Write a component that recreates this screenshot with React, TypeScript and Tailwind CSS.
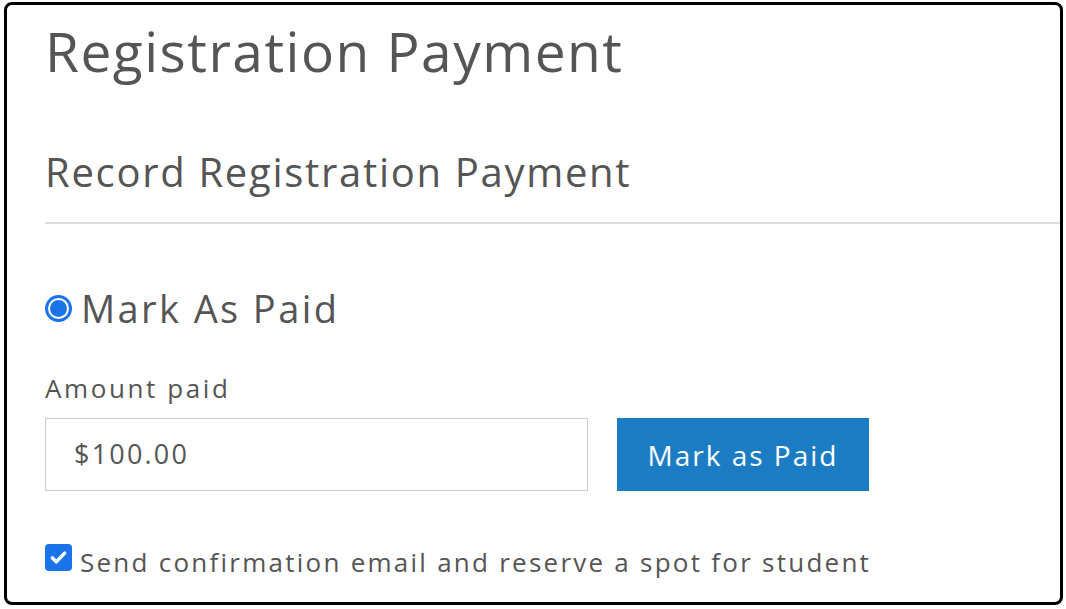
export default function App() {
  return (
    <div
      className="h-[609px] w-[1066px] overflow-hidden bg-white pl-[4px] pt-[2px] text-[#555]"
      style={{ fontFamily: '"Open Sans", "Noto Sans", sans-serif' }}
    >
      <div className="h-[603px] w-[1059px] overflow-hidden rounded-[8px] border-[3px] border-black pl-[38px]">
        <h1 className="mt-[18px] text-[55px] leading-none font-normal tracking-[1.5px]">Registration Payment</h1>
        <h2 className="mt-[74px] text-[40px] leading-none font-normal tracking-[1.7px]">Record Registration Payment</h2>
        <div className="mt-[30px] h-[2px] w-full bg-[#ddd]" />

        <label className="mt-[65px] flex items-center gap-[9px]">
          <span className="flex h-[27px] w-[27px] items-center justify-center rounded-full bg-[#1a73e8] p-[3px]">
            <span className="flex h-full w-full items-center justify-center rounded-full bg-white p-[2px]">
              <span className="h-full w-full rounded-full bg-[#1a73e8]" />
            </span>
          </span>
          <span className="text-[38px] leading-none tracking-[2.4px]">Mark As Paid</span>
        </label>

        <div className="mt-[48px] text-[26px] leading-none tracking-[2.6px]">Amount paid</div>

        <div className="mt-[17px] flex items-center gap-[29px]">
          <div className="flex h-[73px] w-[543px] items-center border border-[#ccc] pl-[28px] text-[27px] tracking-[2.2px]">
            $100.00
          </div>
          <button className="h-[73px] w-[252px] bg-[#1c7cc3] text-[28px] tracking-[2px] text-white">Mark as Paid</button>
        </div>

        <label className="mt-[53px] flex items-start gap-[8px]">
          <span className="flex h-[27px] w-[27px] shrink-0 items-center justify-center rounded-[4px] bg-[#1a73e8]">
            <svg viewBox="0 0 24 24" className="h-[21px] w-[21px]" fill="none" stroke="white" strokeWidth="4" strokeLinecap="round" strokeLinejoin="round">
              <path d="M5 12.5l4.5 4.5L19 7" />
            </svg>
          </span>
          <span className="mt-[5px] whitespace-nowrap text-[26px] leading-none tracking-[2.25px]">
            Send confirmation email and reserve a spot for student
          </span>
        </label>
      </div>
    </div>
  );
}
